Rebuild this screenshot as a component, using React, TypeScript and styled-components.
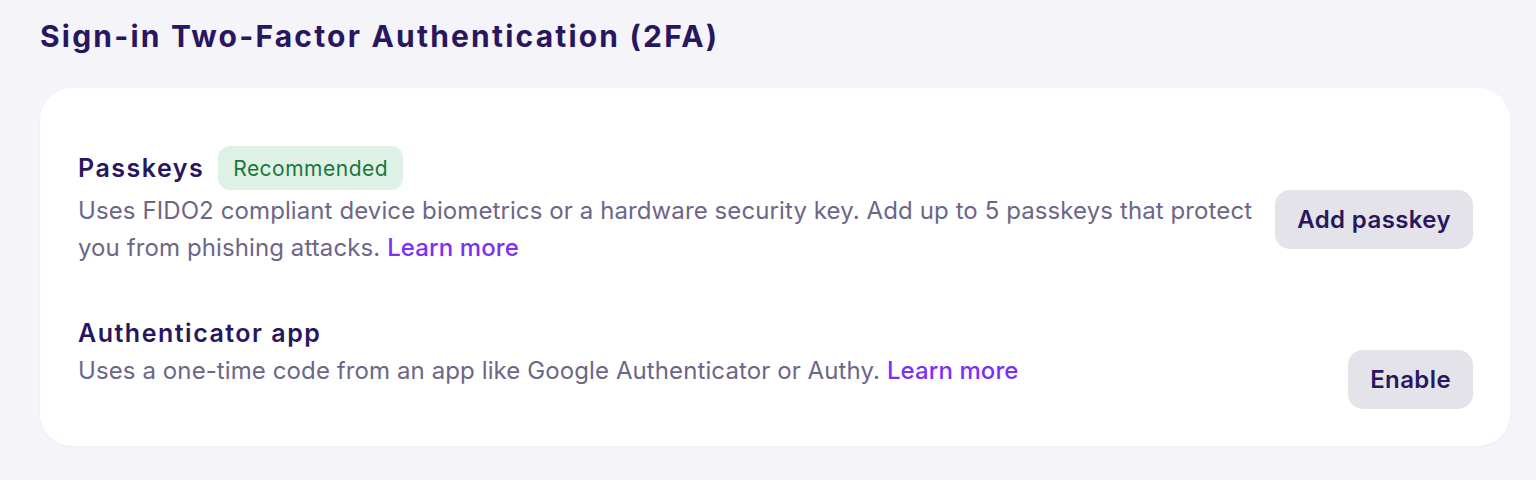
import styled, { createGlobalStyle } from "styled-components";

const GlobalStyle = createGlobalStyle`
  body {
    margin: 0;
    background: #f5f4f9;
    font-family: Inter, "Noto Sans", sans-serif;
    -webkit-font-smoothing: antialiased;
  }
`;

const Page = styled.div`
  padding: 18px 26px 34px 40px;
`;

const Heading = styled.h2`
  margin: 0 0 34px;
  font-size: 30px;
  line-height: 36px;
  font-weight: 700;
  letter-spacing: 2.2px;
  color: #28175f;
`;

const Card = styled.div`
  background: #ffffff;
  border-radius: 32px;
  padding: 58px 37px 37px 38px;
  display: flex;
  flex-direction: column;
  gap: 50px;
  box-shadow: 0 1px 3px rgba(40, 30, 90, 0.04);
`;

const Item = styled.div`
  display: flex;
  flex-direction: column;
  gap: 2px;
`;

const TitleRow = styled.div<{ $tall?: boolean }>`
  display: flex;
  align-items: center;
  gap: 14px;
  height: ${(p) => (p.$tall ? "44px" : "34px")};
`;

const Title = styled.h3`
  margin: 0;
  font-size: 25px;
  line-height: 30px;
  font-weight: 600;
  color: #28175f;
  letter-spacing: 1.5px;
`;

const Badge = styled.span`
  display: inline-flex;
  align-items: center;
  height: 44px;
  padding: 0 15px;
  border-radius: 12px;
  background: #dff1e5;
  color: #1a7640;
  font-size: 21px;
  font-weight: 400;
  letter-spacing: 0.5px;
`;

const Body = styled.div`
  display: flex;
  align-items: flex-start;
  justify-content: space-between;
  gap: 20px;
`;

const Desc = styled.p`
  margin: 0;
  max-width: 1190px;
  font-size: 24px;
  line-height: 37px;
  letter-spacing: 0.1px;
  color: #6c6688;
`;

const Link = styled.a`
  color: #7b2ff7;
  font-weight: 500;
  text-decoration: none;
`;

const Button = styled.button`
  flex-shrink: 0;
  margin-top: -2px;
  height: 59px;
  padding: 0 22px;
  border: none;
  border-radius: 15px;
  background: #e4e3ea;
  color: #28175f;
  font-family: inherit;
  font-size: 24px;
  font-weight: 600;
  letter-spacing: 0.4px;
  cursor: pointer;
`;

export default function App() {
  return (
    <>
      <GlobalStyle />
      <Page>
        <Heading>Sign-in Two-Factor Authentication (2FA)</Heading>
        <Card>
          <Item>
            <TitleRow $tall>
              <Title>Passkeys</Title>
              <Badge>Recommended</Badge>
            </TitleRow>
            <Body>
              <Desc>
                Uses FIDO2 compliant device biometrics or a hardware security key. Add up to 5
                passkeys that protect you from phishing attacks. <Link href="#">Learn more</Link>
              </Desc>
              <Button>Add passkey</Button>
            </Body>
          </Item>
          <Item>
            <TitleRow>
              <Title>Authenticator app</Title>
            </TitleRow>
            <Body>
              <Desc>
                Uses a one-time code from an app like Google Authenticator or Authy.{" "}
                <Link href="#">Learn more</Link>
              </Desc>
              <Button>Enable</Button>
            </Body>
          </Item>
        </Card>
      </Page>
    </>
  );
}
